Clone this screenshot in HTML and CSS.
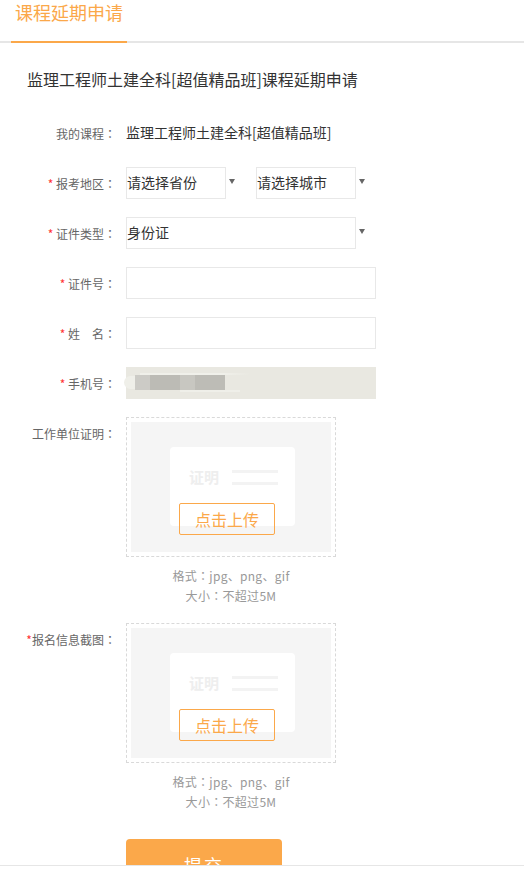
FILE: index.html
```html
<!DOCTYPE html>
<html lang="zh-CN">
<head>
<meta charset="utf-8">
<title>课程延期申请</title>
<link rel="stylesheet" href="styles.css">
</head>
<body>
<div class="tabs"><div class="tab">课程延期申请</div></div>
<h1 class="title">监理工程师土建全科[超值精品班]课程延期申请</h1>
<form class="form">
  <div class="row">
    <div class="label">我的课程<span class="colon" lang="zh-TW">：</span></div>
    <div class="value">监理工程师土建全科[超值精品班]</div>
  </div>
  <div class="row">
    <div class="label"><span class="star">*</span> 报考地区<span class="colon" lang="zh-TW">：</span></div>
    <div class="select-wrap small"><div class="select">请选择省份</div><span class="arrow"></span></div>
    <div class="select-wrap small"><div class="select">请选择城市</div><span class="arrow"></span></div>
  </div>
  <div class="row">
    <div class="label"><span class="star">*</span> 证件类型<span class="colon" lang="zh-TW">：</span></div>
    <div class="select-wrap wide"><div class="select">身份证</div><span class="arrow"></span></div>
  </div>
  <div class="row">
    <div class="label"><span class="star">*</span> 证件号<span class="colon" lang="zh-TW">：</span></div>
    <input class="input" type="text">
  </div>
  <div class="row">
    <div class="label"><span class="star">*</span> 姓　名<span class="colon" lang="zh-TW">：</span></div>
    <input class="input" type="text">
  </div>
  <div class="row">
    <div class="label"><span class="star">*</span> 手机号<span class="colon" lang="zh-TW">：</span></div>
    <div class="phone">
      <div class="smear"></div>
      <div class="mosaic"><i class="m1"></i><i class="m2"></i><i class="m3"></i><i class="m4"></i></div>
    </div>
  </div>
  <div class="row upload-row">
    <div class="label">工作单位证明<span class="colon" lang="zh-TW">：</span></div>
    <div class="upload-col">
      <div class="upload">
        <div class="upload-inner">
          <div class="card">
            <div class="card-top"><span class="card-text">证明</span><div class="card-lines"><i></i><i></i></div></div>
          </div>
          <div class="upload-btn">点击上传</div>
        </div>
      </div>
      <div class="hint">格式<span class="colon" lang="zh-TW">：</span>jpg、png、gif<br>大小<span class="colon" lang="zh-TW">：</span>不超过5M</div>
    </div>
  </div>
  <div class="row upload-row">
    <div class="label"><span class="star">*</span>报名信息截图<span class="colon" lang="zh-TW">：</span></div>
    <div class="upload-col">
      <div class="upload">
        <div class="upload-inner">
          <div class="card">
            <div class="card-top"><span class="card-text">证明</span><div class="card-lines"><i></i><i></i></div></div>
          </div>
          <div class="upload-btn">点击上传</div>
        </div>
      </div>
      <div class="hint">格式<span class="colon" lang="zh-TW">：</span>jpg、png、gif<br>大小<span class="colon" lang="zh-TW">：</span>不超过5M</div>
    </div>
  </div>
  <div class="submit-row"><div class="submit">提交</div></div>
</form>
<div class="footer"></div>
</body>
</html>
```
FILE: styles.css
```css
* { box-sizing: border-box; }
html, body { margin: 0; height: 869px; overflow: hidden; background: #fff; }
body { font-family: "Noto Sans CJK SC", "Open Sans", sans-serif; color: #333; }
.colon { font-family: "Noto Sans CJK TC", sans-serif; }
.tabs { height: 43px; border-bottom: 2px solid #e6e6e6; padding-left: 11px; }
.tab { width: 116px; height: 43px; border-bottom: 2px solid #fba84a; color: #fba84a; font-size: 18px; line-height: 25px; text-align: center; }
.title { margin: 0; padding: 25px 0 0 27px; font-size: 16px; font-weight: 400; line-height: 22px; height: 74px; color: #333; }
.row { display: flex; align-items: flex-start; margin-bottom: 18px; height: 32px; }
.label { width: 116px; height: 32px; margin-right: 10px; flex: none; text-align: right; font-size: 12px; line-height: 33px; color: #666; }
.star { color: #f33; }
.value { font-size: 14px; line-height: 31px; color: #333; }
.select-wrap { display: flex; flex: none; }
.small { width: 130px; }
.wide { width: 260px; }
.select { height: 32px; flex: 1; margin-right: 30px; border: 1px solid #e8e8e8; font-size: 14px; line-height: 29px; color: #333; }
.arrow { width: 0; height: 0; margin: 12px 21px 0 -27px; border-style: solid; border-width: 5px 3.5px 0; border-color: #666 transparent transparent; }
.input { display: block; width: 250px; height: 32px; padding: 0; border: 1px solid #e8e8e8; background: #fff; outline: 0; }
.phone { position: relative; width: 250px; height: 32px; background: #e9e8e1; }
.smear { position: absolute; left: -2px; top: 9px; width: 14px; height: 13px; border-radius: 7px 0 0 7px; background: #efefe9; }
.phone::before { content: ""; position: absolute; left: 14px; top: 6px; width: 110px; height: 2px; background: linear-gradient(90deg, #f0f0ea 75%, #e9e8e1); }
.phone::after { content: ""; position: absolute; left: 54px; top: 23px; width: 60px; height: 2px; background: #efefe9; }
.mosaic { position: absolute; left: 9px; top: 8px; display: flex; height: 15px; }
.mosaic i { display: block; height: 15px; }
.m1 { width: 15px; background: #cccbc6; }
.m2 { width: 30px; background: #bcbbb5; }
.m3 { width: 15px; background: #c8c7c1; }
.m4 { width: 30px; background: #bdbcb6; }
.upload-row { height: auto; margin-bottom: 17px; }
.upload-row + .upload-row { margin-bottom: 27px; }
.upload-col { width: 210px; flex: none; }
.upload { width: 210px; height: 140px; padding: 4px; border: 1px dashed #d9d9d9; }
.upload-inner { position: relative; height: 130px; padding: 25px 0 0 39px; background: #f5f5f5; }
.card { width: 125px; height: 79px; padding: 20px 0 0 19px; background: #fff; border-radius: 4px; }
.card-top { display: flex; align-items: center; gap: 13px; }
.card-text { font-size: 15px; line-height: 20px; font-weight: 700; color: #eee; }
.card-lines { display: flex; flex-direction: column; gap: 9px; }
.card-lines i { display: block; width: 46px; height: 3px; background: #f3f3f3; }
.upload-btn { position: absolute; left: 48px; top: 81px; width: 96px; height: 32px; border: 1px solid #fba84a; border-radius: 2px; color: #fba84a; font-size: 16px; line-height: 30px; text-align: center; }
.hint { margin-top: 9px; font-size: 12px; line-height: 20px; letter-spacing: .3px; color: #999; text-align: center; }
.submit-row { padding-left: 126px; }
.submit { width: 156px; height: 48px; border-radius: 4px; background: #fba84a; color: #fff; font-size: 18px; letter-spacing: 2px; line-height: 52px; text-align: center; }
.footer { position: fixed; left: 0; right: 0; bottom: 0; height: 4px; background: #fff; border-top: 1px solid #e6e6e6; }
```
